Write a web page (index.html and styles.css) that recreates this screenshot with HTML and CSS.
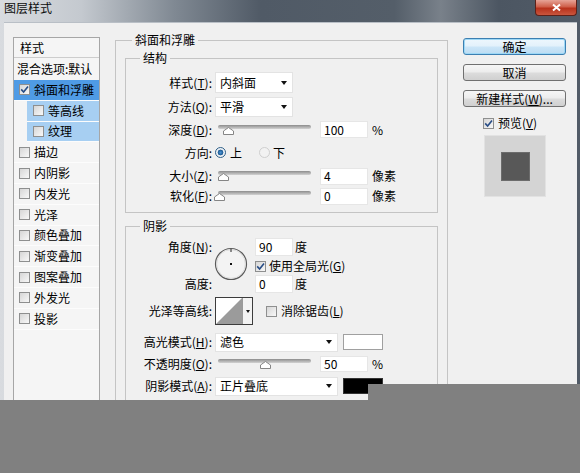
FILE: index.html
```html
<!DOCTYPE html>
<html lang="zh-CN">
<head>
<meta charset="utf-8">
<title>图层样式</title>
<link rel="stylesheet" href="styles.css">
</head>
<body>
<div class="window">
  <div class="titlebar">
    <span class="title">图层样式</span>
    <span class="close"><svg width="11" height="9" viewBox="0 0 11 9"><path d="M2 1.5 L9 7.5 M9 1.5 L2 7.5" stroke="#fff" stroke-width="2"/></svg></span>
  </div>
  <div class="frame">
    <div class="side">
      <div class="side-head">样式</div>
      <div class="side-blend">混合选项:默认</div>
      <div class="item sel"><span class="cb"><svg width="9" height="9" viewBox="0 0 9 9"><path d="M1.2 4.4 L3.6 7 L8 1.4" stroke="#284d86" stroke-width="1.6" fill="none"/></svg></span>斜面和浮雕</div>
      <div class="item sub"><span class="cb"></span>等高线</div>
      <div class="item sub"><span class="cb"></span>纹理</div>
      <div class="item"><span class="cb"></span>描边</div>
      <div class="item"><span class="cb"></span>内阴影</div>
      <div class="item"><span class="cb"></span>内发光</div>
      <div class="item"><span class="cb"></span>光泽</div>
      <div class="item"><span class="cb"></span>颜色叠加</div>
      <div class="item"><span class="cb"></span>渐变叠加</div>
      <div class="item"><span class="cb"></span>图案叠加</div>
      <div class="item"><span class="cb"></span>外发光</div>
      <div class="item"><span class="cb"></span>投影</div>
    </div>

    <div class="main">
      <div class="group outer">
        <div class="gtitle">斜面和浮雕</div>

        <div class="group inner struct">
          <div class="gtitle">结构</div>
          <div class="rows">
            <div class="row r-style"><span class="lbl">样式(<u>T</u>):</span><span class="select sel-short h21"><span>内斜面</span><i class="arrow"></i></span></div>
            <div class="row r-method"><span class="lbl">方法(<u>Q</u>):</span><span class="select sel-short h20"><span>平滑</span><i class="arrow"></i></span></div>
            <div class="row r-depth"><span class="lbl">深度(<u>D</u>):</span><span class="slider"><svg class="thumb" style="left:5px" width="11" height="8" viewBox="0 0 11 8"><path d="M0.5 7.5 V4 L5.5 0.5 L10.5 4 V7.5 Z" fill="#fff" stroke="#858585"/></svg></span><span class="num">100</span><span class="unit">%</span></div>
            <div class="row r-dir"><span class="lbl">方向:</span><span class="radio on"></span><span class="rtxt">上</span><span class="radio off"></span><span class="rtxt2">下</span></div>
            <div class="row r-size"><span class="lbl">大小(<u>Z</u>):</span><span class="slider"><svg class="thumb" style="left:0px" width="11" height="8" viewBox="0 0 11 8"><path d="M0.5 7.5 V4 L5.5 0.5 L10.5 4 V7.5 Z" fill="#fff" stroke="#858585"/></svg></span><span class="num">4</span><span class="unit">像素</span></div>
            <div class="row r-soft"><span class="lbl">软化(<u>F</u>):</span><span class="slider"><svg class="thumb" style="left:-4px" width="11" height="8" viewBox="0 0 11 8"><path d="M0.5 7.5 V4 L5.5 0.5 L10.5 4 V7.5 Z" fill="#fff" stroke="#858585"/></svg></span><span class="num">0</span><span class="unit">像素</span></div>
          </div>
        </div>

        <div class="group inner shadow">
          <div class="gtitle">阴影</div>
          <div class="rows">
            <div class="angle">
              <span class="lbl a1">角度(<u>N</u>):</span>
              <svg class="dial" width="34" height="34" viewBox="0 0 34 34">
                <circle cx="17" cy="17" r="15.5" fill="#f3f3f3" stroke="#5a5a5a" stroke-width="1.2"/>
                <circle cx="17" cy="17" r="14.3" fill="none" stroke="#d8d8d8" stroke-width="0.8"/>
                <rect x="16" y="16" width="2" height="2" fill="#111"/>
                <path d="M17 2 V5" stroke="#222" stroke-width="1"/>
              </svg>
              <span class="c3 a1c"><span class="num sm">90</span><span class="deg">度</span></span>
              <span class="c3 a2c chk"><span class="cb"><svg width="9" height="9" viewBox="0 0 9 9"><path d="M1.2 4.4 L3.6 7 L8 1.4" stroke="#284d86" stroke-width="1.6" fill="none"/></svg></span><span class="ctxt">使用全局光(<u>G</u>)</span></span>
              <span class="lbl a3">高度:</span>
              <span class="c3 a3c"><span class="num sm">0</span><span class="deg">度</span></span>
            </div>
            <div class="row r-contour">
              <span class="lbl">光泽等高线:</span>
              <span class="contour">
                <svg width="26" height="26" viewBox="0 0 26 26"><rect width="26" height="26" fill="#fff"/><path d="M0 26 L26 0 V26 Z" fill="#9b9b9b"/></svg>
                <span class="contour-btn"><i class="arrow"></i></span>
              </span>
              <span class="chk aa"><span class="cb"></span><span class="ctxt">消除锯齿(<u>L</u>)</span></span>
            </div>
            <div class="row r-mode"><span class="lbl">高光模式(<u>H</u>):</span><span class="select sel-long h19"><span>滤色</span><i class="arrow"></i></span><span class="swatch"></span></div>
            <div class="row r-opacity"><span class="lbl">不透明度(<u>O</u>):</span><span class="slider"><svg class="thumb" style="left:42px" width="11" height="8" viewBox="0 0 11 8"><path d="M0.5 7.5 V4 L5.5 0.5 L10.5 4 V7.5 Z" fill="#fff" stroke="#858585"/></svg></span><span class="num h16">50</span><span class="unit">%</span></div>
            <div class="row r-shmode"><span class="lbl">阴影模式(<u>A</u>):</span><span class="select sel-long h19"><span>正片叠底</span><i class="arrow"></i></span><span class="swatch black"></span></div>
          </div>
        </div>
      </div>
    </div>

    <div class="actions">
      <div class="btn default">确定</div>
      <div class="btn">取消</div>
      <div class="btn">新建样式(<u>W</u>)...</div>
      <div class="preview-chk"><span class="cb"><svg width="9" height="9" viewBox="0 0 9 9"><path d="M1.2 4.4 L3.6 7 L8 1.4" stroke="#284d86" stroke-width="1.6" fill="none"/></svg></span><span class="ctxt">预览(<u>V</u>)</span></div>
      <div class="preview"><i></i></div>
    </div>
  </div>
</div>
<div class="cover"></div>
</body>
</html>
```

FILE: styles.css
```css
* { box-sizing: border-box; margin: 0; padding: 0; }
html, body { width: 580px; height: 473px; }
body {
  background: #808080;
  font-family: "Noto Sans CJK SC", "Noto Sans", sans-serif;
  font-size: 12px;
  line-height: 14px;
  color: #000;
  position: relative;
  overflow: hidden;
}
u { text-decoration: underline; }

.window {
  height: 400px;
  overflow: hidden;
  display: flex;
  flex-direction: column;
  background: linear-gradient(to right, #d8dbdf 0, #c4c9cf 14%, #808993 30%, #505a66 45%, #545e69 68%, #79818a 76%, #4c5662 86%, #515b67 100%);
}
.titlebar {
  height: 22px;
  flex: none;
  display: flex;
  justify-content: space-between;
  align-items: flex-start;
  padding-left: 4px;
}
.title { margin-top: 1px; color: #0d0d0d; }
.close {
  width: 42px;
  height: 16px;
  margin-right: 3px;
  display: flex;
  align-items: center;
  justify-content: center;
  background: linear-gradient(#e6a497, #cf5f4a 45%, #b8321c 55%, #c9563e);
  border: 1px solid #5d2119;
  border-top: 0;
  border-radius: 0 0 4px 4px;
}

.frame {
  flex: 1;
  margin: 0 3px 0 4px;
  background: #f0f0f0;
  border-top: 1px solid #b9bfc6;
  display: flex;
  align-items: flex-start;
  padding: 14px 0 0 9px;
}

/* left list */
.side {
  width: 87px;
  height: 420px;
  flex: none;
  border: 1px solid #a6a6a6;
  background: #f5f5f5;
}
.side-head {
  height: 20px;
  padding-left: 6px;
  display: flex;
  align-items: center;
  border-bottom: 1px solid #cdcdcd;
}
.side-blend {
  height: 22px;
  padding-left: 3px;
  display: flex;
  align-items: center;
}
.item {
  height: 20.8px;
  display: flex;
  align-items: center;
  padding-left: 5px;
  border-bottom: 1px solid #fcfcfc;
}
.item .cb { margin-right: 4px; }
.item.sel { background: #4f9be5; }
.item.sub { margin-left: 13px; padding-left: 6px; background: #a7cff2; }

.cb {
  width: 11px;
  height: 11px;
  flex: none;
  border: 1px solid #8e8f8f;
  background: linear-gradient(135deg, #d6d6d6, #f8f8f8);
  display: inline-flex;
  align-items: center;
  justify-content: center;
}

/* middle */
.main { width: 333px; margin-left: 15px; flex: none; }
.group { border: 1px solid #c4c4c4; }
.outer { margin-top: 3px; height: 420px; }
.gtitle {
  width: max-content;
  height: 14px;
  margin: -8px 0 0 16px;
  padding: 0 3px;
  background: #f0f0f0;
}
.inner { margin-left: 9px; margin-right: 9px; }
.inner .gtitle { margin-left: 14px; }
.struct { margin-top: 11px; }
.struct .rows { padding: 6px 0 7px; }
.shadow { margin-top: 13px; height: 220px; }
.shadow .rows { padding-top: 4px; }

.row { display: flex; align-items: center; }
.lbl {
  width: 86px;
  flex: none;
  margin-right: 3px;
  text-align: right;
  white-space: nowrap;
}
.r-style { height: 23px; }
.r-method { height: 25px; }
.r-depth { height: 21px; }
.r-dir { height: 25px; }
.r-size { height: 22px; }
.r-soft { height: 18px; }

.select {
  display: flex;
  align-items: center;
  justify-content: space-between;
  background: #fff;
  border: 1px solid #e3e3e3;
  padding: 0 5px 0 4px;
}
.sel-short { width: 78px; }
.sel-long { width: 123px; }
.h21 { height: 21px; }
.h20 { height: 20px; }
.h19 { height: 19px; }
.arrow {
  width: 0;
  height: 0;
  border-left: 3.5px solid transparent;
  border-right: 3.5px solid transparent;
  border-top: 4px solid #111;
}

.slider {
  width: 93px;
  height: 12px;
  margin-left: 3px;
  position: relative;
  flex: none;
}
.slider::before {
  content: "";
  position: absolute;
  left: 0;
  right: 0;
  top: 1px;
  height: 4px;
  border-radius: 2px;
  background: linear-gradient(#8c8c8c, #d2d2d2);
}
.thumb { position: absolute; top: 3px; }

.num {
  width: 48px;
  height: 17px;
  margin-left: 9px;
  padding-left: 3px;
  flex: none;
  background: #fff;
  border: 1px solid #e6e6e6;
  display: flex;
  align-items: center;
}
.num.h16 { height: 16px; }
.unit { margin-left: 4px; }

.radio {
  width: 11px;
  height: 11px;
  flex: none;
  border-radius: 50%;
  border: 1px solid #8a8a8a;
}
.radio.on {
  border-color: #2e5f88;
  background: radial-gradient(circle, #4a93d4 0, #1d5a92 2.6px, #eef2f6 3.2px);
}
.radio.off { border-color: #cfcfcf; background: #f2f2f2; margin-left: 17px; }
.rtxt { margin-left: 4px; }
.rtxt2 { margin-left: 3px; }

/* angle block */
.angle {
  display: grid;
  grid-template-columns: 89px 40px auto;
  grid-template-rows: 20px 18px 18px;
  align-items: center;
}
.angle .lbl { width: auto; }
.a1 { grid-column: 1; grid-row: 1; }
.a3 { grid-column: 1; grid-row: 3; }
.dial { grid-column: 2; grid-row: 1 / 4; align-self: start; margin-top: 10px; margin-left: -1px; }
.c3 { grid-column: 3; display: flex; align-items: center; }
.a1c { grid-row: 1; }
.a2c { grid-row: 2; }
.a3c { grid-row: 3; }
.num.sm { width: 38px; height: 18px; margin-left: 0; }
.deg { margin-left: 2px; }
.chk { display: flex; align-items: center; }
.ctxt { margin-left: 3px; }

.r-contour { height: 28px; margin-top: 4px; }
.contour {
  width: 38px;
  height: 28px;
  flex: none;
  border: 1px solid #3c3c3c;
  background: #fff;
  display: flex;
}
.contour-btn {
  flex: 1;
  border-left: 1px solid #9a9a9a;
  background: #f3f3f3;
  display: flex;
  align-items: center;
  justify-content: center;
}
.contour-btn .arrow { border-left-width: 2.5px; border-right-width: 2.5px; border-top-width: 3px; }
.aa { margin-left: 13px; }
.aa .ctxt { margin-left: 4px; }

.r-mode { height: 20px; margin-top: 7px; }
.r-opacity { height: 20px; margin-top: 2px; }
.r-shmode { height: 20px; margin-top: 2px; }
.swatch {
  width: 40px;
  height: 16px;
  margin-left: 5px;
  flex: none;
  border: 1px solid #a0a0a0;
  background: #fff;
}
.swatch.black { background: #000; border-color: #333; }

/* right column */
.actions {
  width: 103px;
  margin-left: 15px;
  flex: none;
  padding-top: 1px;
  display: flex;
  flex-direction: column;
}
.btn {
  height: 17px;
  border: 1px solid #707070;
  border-radius: 3px;
  background: linear-gradient(#f6f6f6, #ececec 48%, #dcdcdc 52%, #d0d0d0);
  display: flex;
  align-items: center;
  justify-content: center;
}
.btn + .btn { margin-top: 9px; }
.btn.default {
  border-color: #3c7fb1;
  box-shadow: inset 0 0 0 1px #9dd8f6;
  background: linear-gradient(#eef7fd, #e3f1fb 48%, #cce6f8 52%, #bcdcf2);
}
.preview-chk {
  height: 14px;
  margin: 9px 0 0 20px;
  display: flex;
  align-items: center;
}
.preview-chk .ctxt { margin-left: 4px; }
.preview {
  width: 62px;
  height: 62px;
  margin: 5px 0 0 21px;
  background: #d4d4d4;
  border: 1px solid #e2e2e2;
  display: flex;
  align-items: center;
  justify-content: center;
}
.preview i {
  width: 29px;
  height: 29px;
  background: #585858;
  border: 1px solid #6c6c6c;
}

.cover {
  position: absolute;
  left: 368px;
  top: 384px;
  width: 212px;
  height: 16px;
  background: #808080;
}
```
